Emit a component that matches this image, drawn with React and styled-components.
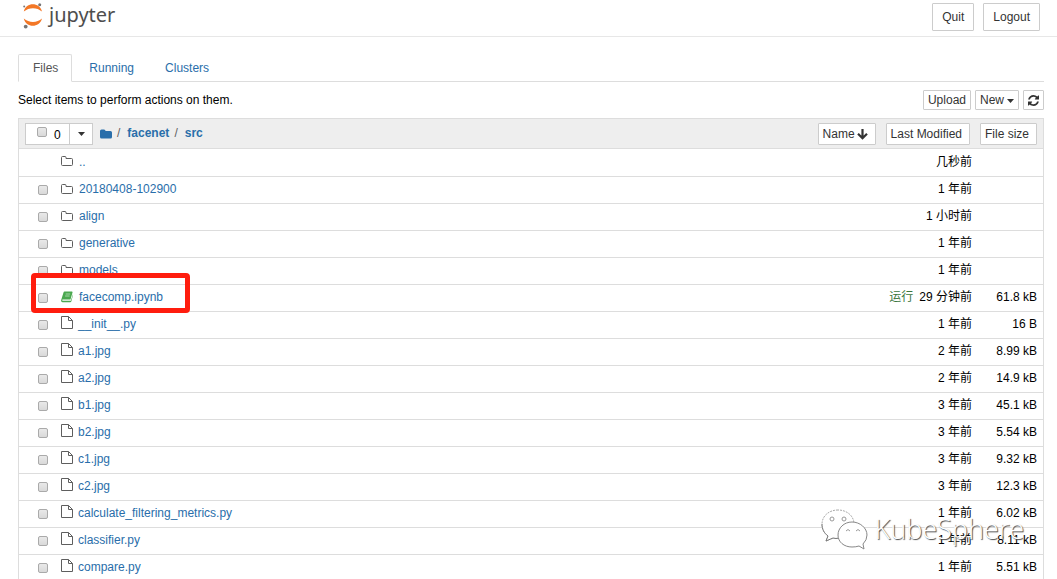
import React, { useState } from 'react';
import styled, { createGlobalStyle } from 'styled-components';

const GlobalStyle = createGlobalStyle`
  * {
    box-sizing: border-box;
  }

  body {
    margin: 0;
    background: #fff;
    color: #000;
    font-family: 'Liberation Sans', 'Noto Sans CJK SC', sans-serif;
    font-size: 12px;
    line-height: 17px;
  }

  a {
    color: #296eaa;
    text-decoration: none;
  }

  svg {
    display: block;
  }
`;

const Page = styled.div`
  position: relative;
  height: 100vh;
  overflow: hidden;
`;

const Header = styled.header`
  display: flex;
  align-items: flex-start;
  justify-content: space-between;
  height: 37px;
  padding: 3px 17px 0 22px;
  border-bottom: 1px solid #e7e7e7;
`;

const Logo = styled.a`
  display: flex;
  gap: 6px;
  color: #4e4e4e;
  font-family: 'Noto Sans', sans-serif;
  font-size: 20px;
  line-height: 23px;
`;

const ButtonGroup = styled.div`
  display: flex;
  align-items: center;
  gap: ${props => props.$gap || '4px'};
`;

const Button = styled.button`
  display: flex;
  align-items: center;
  justify-content: center;
  gap: 3px;
  height: ${props => (props.$large ? '28px' : '20px')};
  padding: ${props => (props.$large ? '0 9px' : '1px 4px 0')};
  border: 1px solid #ccc;
  border-radius: 1px;
  background: #fff;
  color: #333;
  font: inherit;
  white-space: nowrap;
`;

const SortButton = styled(Button)`
  gap: 2px;
  height: 22px;
  padding: 2px 7px 0 4px;
`;

const Main = styled.main`
  padding: 17px 13px 0 18px;
`;

const Tabs = styled.nav`
  display: flex;
  gap: 2px;
  border-bottom: 1px solid #ddd;
`;

const Tab = styled.a`
  height: 28px;
  margin-bottom: -1px;
  padding: 5px 13px 5px 14px;
  border: 1px solid ${props => (props.$active ? '#ddd' : 'transparent')};
  border-bottom-color: ${props => (props.$active ? '#fff' : 'transparent')};
  border-radius: 2px 2px 0 0;
  color: ${props => (props.$active ? '#555' : '#296eaa')};
`;

const Toolbar = styled.div`
  display: flex;
  align-items: center;
  justify-content: space-between;
  height: 36px;
`;

const List = styled.section`
  border: 1px solid #ddd;
`;

const ListHeader = styled.div`
  display: flex;
  align-items: center;
  justify-content: space-between;
  height: 30px;
  padding: 0 6px;
  border-bottom: 1px solid #ddd;
  background: #eee;
`;

const Selector = styled.div`
  display: flex;
  height: 22px;
  border: 1px solid #ccc;
  background: #fff;
`;

const SelectAll = styled.label`
  display: flex;
  align-items: flex-start;
  gap: 7px;
  width: 44px;
  padding: 3px 0 0 11px;
  border-right: 1px solid #ccc;
`;

const SelectMenu = styled.button`
  display: flex;
  align-items: center;
  justify-content: center;
  width: 22px;
  padding: 0;
  border: 0;
  background: none;
`;

const Checkbox = styled.input`
  display: block;
  width: 10px;
  height: 10px;
  margin: 0;
  appearance: none;
  border: 1px solid #aaa;
  border-radius: 2px;
  background: linear-gradient(#e9e9e9, #d9d9d9);

  &:checked {
    background: #296eaa;
  }
`;

const Breadcrumb = styled.nav`
  display: flex;
  align-items: center;
  gap: 5px;
  margin-left: 7px;
  color: #5e5e5e;

  a {
    font-weight: bold;
  }

  span {
    margin-right: 2px;
  }
`;

const Table = styled.table`
  width: 100%;
  border-collapse: collapse;
`;

const Row = styled.tr`
  height: 27px;
  border-bottom: 1px solid #ddd;
`;

const Cell = styled.td`
  padding: 0;
  text-align: right;
  white-space: nowrap;
`;

const CheckCell = styled(Cell)`
  width: 42px;
  padding-left: 19px;
`;

const NameCell = styled(Cell)`
  position: relative;
  text-align: left;
`;

const SizeCell = styled(Cell)`
  width: 71px;
  padding-right: 6px;
`;

const ItemLink = styled.a`
  display: flex;
  align-items: center;
  gap: ${props => (props.$file ? '5px' : '6px')};
`;

const Running = styled.span`
  margin-right: 6px;
  color: #3c763d;
`;

const Highlight = styled.div`
  position: absolute;
  top: -12px;
  left: -30px;
  width: 159px;
  height: 40px;
  border: 5px solid #ff1d0e;
  border-radius: 4px;
  pointer-events: none;
`;

const Watermark = styled.div`
  position: absolute;
  right: 33px;
  bottom: 29px;
  display: flex;
  align-items: center;
  gap: 7px;
  color: #fff;
  font-family: 'Open Sans', sans-serif;
  font-size: 27px;
  font-weight: 300;
  line-height: 42px;
  text-shadow: 1px 1px 1px #444;
  pointer-events: none;
`;

function JupyterIcon() {
  return (
    <svg width="21" height="26" viewBox="0 0 21 26">
      <path d="M1.800 8.500C4 -1.200 17.500 -1.200 20 8.500C15 4 7 4 1.800 8.500Z" fill="#f37726" />
      <path d="M1.800 15.500C4 25.200 17.500 25.200 20 15.500C15 20 7 20 1.800 15.500Z" fill="#f37726" />
      <circle cx="2.200" cy="3.500" r="1" fill="#767677" />
      <circle cx="17.700" cy="1.700" r="1.500" fill="#767677" />
      <circle cx="3.700" cy="23.600" r="1.900" fill="#767677" />
    </svg>
  );
}

function FolderIcon() {
  return (
    <svg width="12" height="14" viewBox="0 0 12 14" fill="none" stroke="#5e5e5e">
      <path d="M.5 2.500Q.5 1.500 1.500 1.500H4Q5 1.500 5 2.500V3.500H10.500Q11.500 3.500 11.500 4.500V9.500Q11.500 10.500 10.500 10.500H1.500Q.5 10.500 .5 9.500Z" />
    </svg>
  );
}

function OpenFolderIcon() {
  return (
    <svg width="12" height="12" viewBox="0 0 12 12" fill="#296eaa">
      <path d="M0 3Q0 1.500 1.500 1.500H4Q5.500 1.500 5.500 3H10.500Q12 3 12 4.500V9Q12 10.500 10.500 10.500H1.500Q0 10.500 0 9Z" />
    </svg>
  );
}

function FileIcon() {
  return (
    <svg width="12" height="17" viewBox="0 0 12 17" fill="none" stroke="#5e5e5e">
      <path d="M.5 .5H7.500L11.500 4.500V12.500H.5ZM7.500 .5V4.500H11.500" />
    </svg>
  );
}

function NotebookIcon() {
  return (
    <svg width="12" height="14" viewBox="0 0 12 14">
      <path d="M3.500 .5H11Q11.800 .5 11.500 1.400L9.500 8.500H1.500Q.8 9.500 2 9.800H9.800L12 3L11.900 4.500L10.300 10.500Q10 11.300 9.200 11.300H1.500Q-.3 10.800 .2 9L2.500 1.500Q2.800 .5 3.500 .5Z" fill="#4aa84f" />
      <path d="M4.700 3H9.200M4.100 5H8.600" stroke="#a5d6a7" />
    </svg>
  );
}

function CaretIcon() {
  return (
    <svg width="7" height="4" viewBox="0 0 7 4" fill="#333">
      <path d="M0 0H7L3.500 4Z" />
    </svg>
  );
}

function ArrowDownIcon() {
  return (
    <svg width="11" height="11" viewBox="0 0 11 11" fill="none" stroke="#333" strokeWidth="2.200">
      <path d="M5.500 0V9M1 4.800L5.500 9.300L10 4.800" />
    </svg>
  );
}

function RefreshIcon() {
  return (
    <svg width="11" height="11" viewBox="0 0 1536 1536" fill="#333">
      <path d="M1511 928q0 5-1 7-64 268-268 434.500T764 1536q-146 0-282.500-55T238 1324l-129 129q-19 19-45 19t-45-19-19-45V960q0-26 19-45t45-19h448q26 0 45 19t19 45-19 45l-137 137q71 66 161 102t187 36q134 0 250-65t186-179q11-17 53-117 8-23 30-23h192q13 0 22.500 9.500t9.500 22.500zm25-800v448q0 26-19 45t-45 19h-448q-26 0-45-19t-19-45 19-45l138-138Q969 256 768 256q-134 0-250 65T332 500q-11 17-53 117-8 23-30 23H50q-13 0-22.500-9.500T18 608v-7q65-268 270-434.500T768 0q146 0 284 55.500T1297 212l130-129q19-19 45-19t45 19 19 45z" />
    </svg>
  );
}

function ChatIcon() {
  return (
    <svg width="47" height="42" viewBox="0 0 47 42" fill="#fff">
      <path d="M17 2C8 2 1 8 1 16C1 21 3 25 7 28L5 33L12 30Q15 31 18 30C28 30 33 24 33 16C33 8 26 2 17 2Z" stroke="#aaa" strokeDasharray="2 1" />
      <path d="M1 16C1 21 3 25 7 28L5 33L12 30Q15 31 18 30" stroke="#777" />
      <path d="M31 14C23 14 17 20 17 27C17 34 23 39 31 39Q35 39 38 38L43 41L42 36Q46 32 46 27C46 20 39 14 31 14Z" stroke="#888" />
      <g stroke="#999">
        <circle cx="11" cy="11" r="2" />
        <circle cx="23" cy="11" r="2" />
        <path d="M25 23Q27 20 29 23M35 23Q37 20 39 23" />
      </g>
    </svg>
  );
}

const icons = {
  folder: FolderIcon,
  notebook: NotebookIcon,
  file: FileIcon,
};

const items = [
  { name: '..', type: 'folder', modified: '几秒前' },
  { name: '20180408-102900', type: 'folder', modified: '1 年前' },
  { name: 'align', type: 'folder', modified: '1 小时前' },
  { name: 'generative', type: 'folder', modified: '1 年前' },
  { name: 'models', type: 'folder', modified: '1 年前' },
  { name: 'facecomp.ipynb', type: 'notebook', modified: '29 分钟前', size: '61.8 kB', running: true },
  { name: '__init__.py', type: 'file', modified: '1 年前', size: '16 B' },
  { name: 'a1.jpg', type: 'file', modified: '2 年前', size: '8.99 kB' },
  { name: 'a2.jpg', type: 'file', modified: '2 年前', size: '14.9 kB' },
  { name: 'b1.jpg', type: 'file', modified: '3 年前', size: '45.1 kB' },
  { name: 'b2.jpg', type: 'file', modified: '3 年前', size: '5.54 kB' },
  { name: 'c1.jpg', type: 'file', modified: '3 年前', size: '9.32 kB' },
  { name: 'c2.jpg', type: 'file', modified: '3 年前', size: '12.3 kB' },
  { name: 'calculate_filtering_metrics.py', type: 'file', modified: '1 年前', size: '6.02 kB' },
  { name: 'classifier.py', type: 'file', modified: '1 年前', size: '8.11 kB' },
  { name: 'compare.py', type: 'file', modified: '1 年前', size: '5.51 kB' },
];

const selectable = items.filter(item => item.name !== '..');

function App() {
  const [selected, setSelected] = useState([]);

  function handleToggle(name) {
    setSelected(
      selected.includes(name)
        ? selected.filter(s => s !== name)
        : [...selected, name]
    );
  }

  function handleToggleAll(e) {
    setSelected(e.target.checked ? selectable.map(item => item.name) : []);
  }

  return (
    <Page>
      <GlobalStyle />
      <Header>
        <Logo href="#">
          <JupyterIcon />
          jupyter
        </Logo>
        <ButtonGroup $gap="9px">
          <Button $large>Quit</Button>
          <Button $large>Logout</Button>
        </ButtonGroup>
      </Header>
      <Main>
        <Tabs>
          <Tab href="#files" $active>Files</Tab>
          <Tab href="#running">Running</Tab>
          <Tab href="#clusters">Clusters</Tab>
        </Tabs>
        <Toolbar>
          <span>Select items to perform actions on them.</span>
          <ButtonGroup>
            <Button>Upload</Button>
            <Button>
              New
              <CaretIcon />
            </Button>
            <Button aria-label="Refresh">
              <RefreshIcon />
            </Button>
          </ButtonGroup>
        </Toolbar>
        <List>
          <ListHeader>
            <ButtonGroup $gap="0">
              <Selector>
                <SelectAll>
                  <Checkbox
                    type="checkbox"
                    checked={selected.length === selectable.length}
                    onChange={handleToggleAll}
                  />
                  {selected.length}
                </SelectAll>
                <SelectMenu aria-label="Select by type">
                  <CaretIcon />
                </SelectMenu>
              </Selector>
              <Breadcrumb>
                <a href="#root" aria-label="Home"><OpenFolderIcon /></a>
                <span>/</span>
                <a href="#facenet">facenet</a>
                <span>/</span>
                <a href="#src">src</a>
              </Breadcrumb>
            </ButtonGroup>
            <ButtonGroup $gap="10px">
              <SortButton>
                Name
                <ArrowDownIcon />
              </SortButton>
              <SortButton>Last Modified</SortButton>
              <SortButton>File size</SortButton>
            </ButtonGroup>
          </ListHeader>
          <Table>
            <tbody>
              {items.map(item => {
                const Icon = icons[item.type];

                return (
                  <Row key={item.name}>
                    <CheckCell>
                      {item.name !== '..' && (
                        <Checkbox
                          type="checkbox"
                          aria-label={item.name}
                          checked={selected.includes(item.name)}
                          onChange={() => handleToggle(item.name)}
                        />
                      )}
                    </CheckCell>
                    <NameCell>
                      <ItemLink href="#" $file={item.type === 'file'}>
                        <Icon />
                        {item.name}
                      </ItemLink>
                      {item.running && <Highlight />}
                    </NameCell>
                    <Cell>
                      {item.running && <Running>运行</Running>}
                      {item.modified}
                    </Cell>
                    <SizeCell>{item.size}</SizeCell>
                  </Row>
                );
              })}
            </tbody>
          </Table>
        </List>
      </Main>
      <Watermark>
        <ChatIcon />
        KubeSphere
      </Watermark>
    </Page>
  );
}

export default App;
